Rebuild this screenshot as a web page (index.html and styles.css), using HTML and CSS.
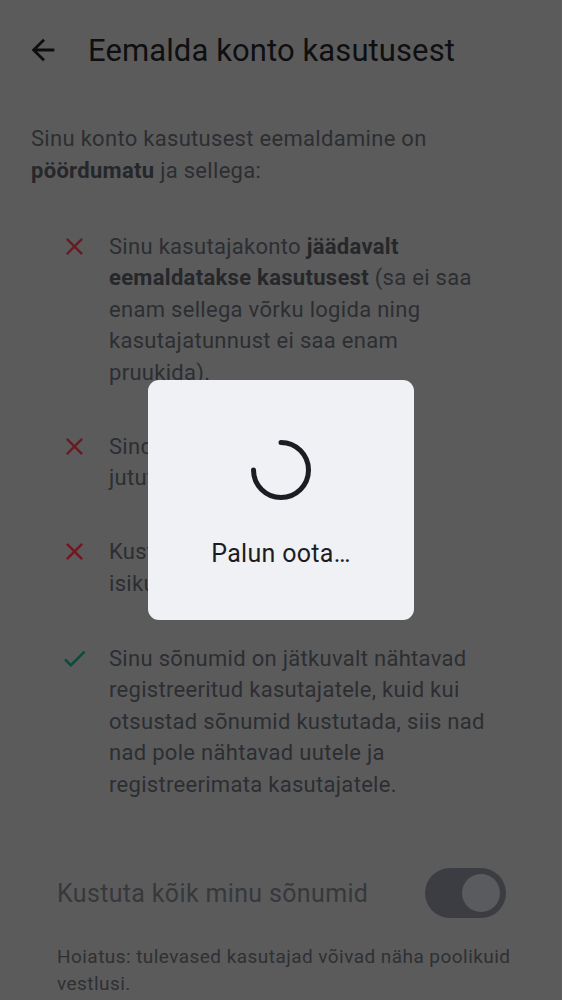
FILE: index.html
```html
<!DOCTYPE html>
<html lang="et">
<head>
<meta charset="utf-8">
<title>Eemalda konto kasutusest</title>
<link rel="stylesheet" href="styles.css">
</head>
<body>
<header class="topbar">
  <svg class="back" viewBox="0 0 24 24" width="34" height="34"><path d="M20 11H7.83l5.59-5.59L12 4l-8 8 8 8 1.41-1.41L7.83 13H20v-2z"/></svg>
  <h1 class="title">Eemalda konto kasutusest</h1>
</header>
<main class="content">
  <p class="intro">Sinu konto kasutusest eemaldamine on <b>pöördumatu</b> ja sellega:</p>
  <ul class="list">
    <li class="item">
      <span class="ico"><svg class="x" viewBox="0 0 24 24" width="29" height="29"><path d="M19 6.41L17.59 5 12 10.59 6.41 5 5 6.41 10.59 12 5 17.59 6.41 19 12 13.41 17.59 19 19 17.59 13.41 12z"/></svg></span>
      <span class="txt">Sinu kasutajakonto <b>jäädavalt eemaldatakse kasutusest</b> (sa ei saa enam sellega võrku logida ning kasutajatunnust ei saa enam pruukida).</span>
    </li>
    <li class="item">
      <span class="ico"><svg class="x" viewBox="0 0 24 24" width="29" height="29"><path d="M19 6.41L17.59 5 12 10.59 6.41 5 5 6.41 10.59 12 5 17.59 6.41 19 12 13.41 17.59 19 19 17.59 13.41 12z"/></svg></span>
      <span class="txt">Sind eemaldatakse kõikidest jututubadest.</span>
    </li>
    <li class="item">
      <span class="ico"><svg class="x" viewBox="0 0 24 24" width="29" height="29"><path d="M19 6.41L17.59 5 12 10.59 6.41 5 5 6.41 10.59 12 5 17.59 6.41 19 12 13.41 17.59 19 19 17.59 13.41 12z"/></svg></span>
      <span class="txt">Kustutame sinu andmed meie isikutuvastusserverist.</span>
    </li>
    <li class="item item-ok">
      <span class="ico"><svg class="ok" viewBox="0 0 24 24" width="29" height="29"><path d="M9 16.17L4.83 12l-1.42 1.41L9 19 21 7l-1.41-1.41z"/></svg></span>
      <span class="txt">Sinu sõnumid on jätkuvalt nähtavad registreeritud kasutajatele, kuid kui otsustad sõnumid kustutada, siis nad nad pole nähtavad uutele ja registreerimata kasutajatele.</span>
    </li>
  </ul>
  <div class="toggle-row">
    <span class="toggle-label">Kustuta kõik minu sõnumid</span>
    <span class="switch"><span class="knob"></span></span>
  </div>
  <p class="warn">Hoiatus: tulevased kasutajad võivad näha poolikuid vestlusi.</p>
</main>
<div class="scrim">
  <div class="dialog">
    <svg class="spinner" viewBox="0 0 64 64" width="64" height="64"><path d="M32 4.5 A27.5 27.5 0 1 1 4.5 32" fill="none" stroke="#1b1d22" stroke-width="5" stroke-linecap="round"/></svg>
    <div class="wait">Palun oota…</div>
  </div>
</div>
</body>
</html>
```
FILE: styles.css
```css
html, body {
  margin: 0;
  padding: 0;
}
body {
  background: #5b5b5b;
  font-family: Roboto, "Noto Sans", sans-serif;
  color: #2c2e32;
  overflow: hidden;
  height: 1000px;
}
.topbar {
  height: 100px;
  display: flex;
  align-items: center;
  padding-left: 26px;
}
.back {
  fill: #0e0e10;
  flex: none;
}
.title {
  margin: 0 0 0 28px;
  font-size: 31px;
  font-weight: 400;
  color: #0f0f11;
  letter-spacing: 0.1px;
}
.content {
  padding: 0 31px;
}
.intro {
  margin: 23px 0 0;
  font-size: 22px;
  line-height: 31.5px;
  letter-spacing: 0.3px;
}
b {
  font-weight: 700;
  color: #25272b;
}
.list {
  list-style: none;
  margin: 44.5px 0 0;
  padding: 0;
  display: flex;
  flex-direction: column;
  gap: 42.5px;
}
.item {
  display: grid;
  grid-template-columns: 78px 1fr;
  font-size: 22px;
  line-height: 31.5px;
  letter-spacing: 0.3px;
  padding-right: 36px;
}
.item-ok {
  margin-top: 1px;
}
.ico {
  padding-left: 29px;
  height: 31.5px;
  display: flex;
  align-items: center;
}
.x { fill: #701822; }
.ok { fill: #0c4a3a; }
.toggle-row {
  margin-top: 68px;
  padding: 0 25px 0 26px;
  display: flex;
  align-items: center;
  justify-content: space-between;
  height: 50px;
}
.toggle-label {
  font-size: 25px;
  color: #37383c;
  letter-spacing: 0.35px;
}
.switch {
  width: 81px;
  height: 50px;
  border-radius: 25px;
  background: #3c3d42;
  display: flex;
  align-items: center;
  justify-content: flex-end;
  padding-right: 6px;
  box-sizing: border-box;
}
.knob {
  width: 38px;
  height: 38px;
  border-radius: 50%;
  background: #5a5b5e;
}
.warn {
  margin: 24.5px 0 0;
  padding-left: 26px;
  font-size: 19px;
  line-height: 27px;
  color: #2e3034;
  letter-spacing: 0.45px;
}
.scrim {
  position: fixed;
  inset: 0;
  display: flex;
  align-items: center;
  justify-content: center;
}
.dialog {
  width: 266px;
  height: 240px;
  box-sizing: border-box;
  background: #f0f1f5;
  border-radius: 11px;
  display: flex;
  flex-direction: column;
  align-items: center;
  padding-top: 58px;
}
.wait {
  margin-top: 37px;
  font-size: 25px;
  line-height: 30px;
  color: #1b1d22;
  letter-spacing: 0.3px;
}
```
